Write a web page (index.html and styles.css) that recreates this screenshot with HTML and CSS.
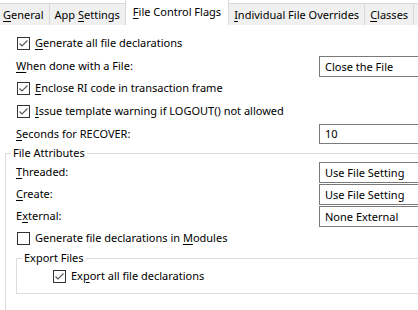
FILE: index.html
```html
<!DOCTYPE html>
<html lang="en">
<head>
  <meta charset="UTF-8">
  <title>File Control Flags</title>
  <link rel="stylesheet" href="styles.css">
</head>
<body>

  <div class="tabs">
    <div class="tab tab-general"><u>G</u>eneral</div>
    <div class="tab">App <u>S</u>ettings</div>
    <div class="tab active"><u>F</u>ile Control Flags</div>
    <div class="tab"><u>I</u>ndividual File Overrides</div>
    <div class="tab"><u>C</u>lasses</div>
    <div class="tab">C</div>
  </div>

  <div class="page">
    <div class="row">
      <span class="check checked"><svg viewBox="0 0 11 11"><path d="M1.5 5.5 L4 8 L9.5 2.5"/></svg></span>
      <span><u>G</u>enerate all file declarations</span>
    </div>

    <div class="row field">
      <span class="label"><u>W</u>hen done with a File:</span>
      <div class="combo">Close the File</div>
    </div>

    <div class="row">
      <span class="check checked"><svg viewBox="0 0 11 11"><path d="M1.5 5.5 L4 8 L9.5 2.5"/></svg></span>
      <span><u>E</u>nclose RI code in transaction frame</span>
    </div>

    <div class="row">
      <span class="check checked"><svg viewBox="0 0 11 11"><path d="M1.5 5.5 L4 8 L9.5 2.5"/></svg></span>
      <span><u>I</u>ssue template warning if LOGOUT() not allowed</span>
    </div>

    <div class="row field">
      <span class="label"><u>S</u>econds for RECOVER:</span>
      <div class="combo textbox">10</div>
    </div>

    <fieldset class="group outer">
      <legend>File Attributes</legend>

      <div class="row field">
        <span class="label"><u>T</u>hreaded:</span>
        <div class="combo">Use File Setting</div>
      </div>
      <div class="row field">
        <span class="label"><u>C</u>reate:</span>
        <div class="combo">Use File Setting</div>
      </div>
      <div class="row field">
        <span class="label">E<u>x</u>ternal:</span>
        <div class="combo">None External</div>
      </div>

      <div class="row">
        <span class="check"></span>
        <span>Generate file declarations in <u>M</u>odules</span>
      </div>

      <fieldset class="group inner">
        <legend>Export Files</legend>
        <div class="row">
          <span class="check checked"><svg viewBox="0 0 11 11"><path d="M1.5 5.5 L4 8 L9.5 2.5"/></svg></span>
          <span>Ex<u>p</u>ort all file declarations</span>
        </div>
      </fieldset>
    </fieldset>
  </div>

</body>
</html>
```

FILE: styles.css
```css
body {
  font-family: 'Noto Sans', 'DejaVu Sans', sans-serif;
  font-size: 11px;
  color: #000;
  background-color: #fff;
  margin: 0;
  padding: 0;
  width: 418px;
  height: 310px;
  overflow: hidden;
}

u {
  text-decoration-thickness: 1px;
  text-underline-offset: 2px;
}

/* tab strip */
.tabs {
  display: flex;
  align-items: flex-end;
  height: 25px;
  white-space: nowrap;
}

.tab {
  height: 21px;
  line-height: 21px;
  padding: 0 5px;
  background-color: #f0f0f0;
  border: 1px solid #d9d9d9;
  border-bottom: none;
  margin-left: -1px;
}

.tab-general {
  padding-left: 3px;
}

.tab.active {
  height: 25px;
  line-height: 23px;
  background-color: #fff;
  padding: 0 7px;
  position: relative;
  z-index: 1;
}

/* tab page */
.page {
  padding: 7px 0 0 16px;
  width: 500px;
}

.row {
  display: flex;
  align-items: center;
  height: 23px;
  white-space: nowrap;
}

.row.field {
  height: 22px;
}

.row > span:last-child,
.label {
  line-height: 14px;
  padding-bottom: 1px;
}

.label {
  width: 303px;
}

.check {
  width: 11px;
  height: 11px;
  border: 1px solid #333;
  margin: 0 5px 0 1px;
  padding: 0;
  display: flex;
  align-items: center;
  justify-content: center;
  flex-shrink: 0;
}

.check svg {
  width: 11px;
  height: 11px;
}

.check svg path {
  fill: none;
  stroke: #555;
  stroke-width: 1.1;
}

.combo {
  height: 19px;
  line-height: 19px;
  width: 140px;
  border: 1px solid #7a7a7a;
  padding: 0 5px;
  box-sizing: content-box;
}

.textbox {
  height: 18px;
  line-height: 18px;
}

/* group boxes */
.group {
  border: 1px solid #dcdcdc;
  margin: 0;
  min-width: 0;
}

.group legend {
  padding: 0 2px;
  height: 16px;
  line-height: 16px;
}

.outer {
  margin: 0 0 0 -11px;
  padding: 0 0 40px 10px;
  width: 480px;
}

.outer legend {
  margin-left: -5px;
}

.outer .row {
  height: 22px;
}

.inner {
  margin: 1px 0 0 0;
  padding: 0 0 7px 35px;
}

.inner legend {
  margin-left: -30px;
}

.inner .row {
  height: 20px;
}
```
